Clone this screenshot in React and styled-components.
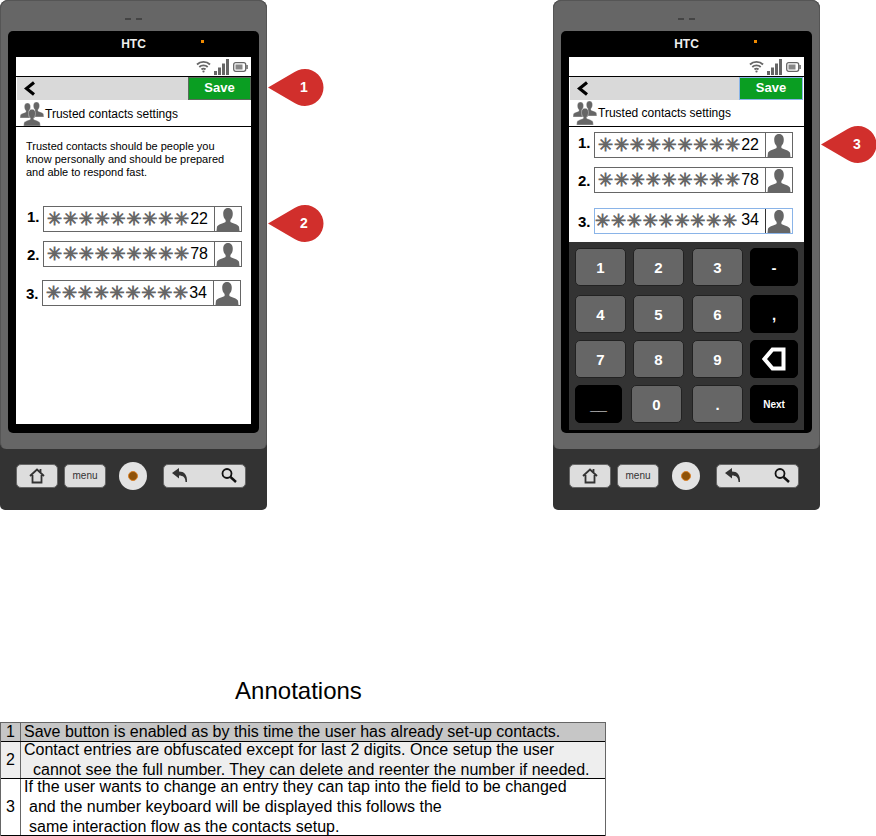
import styled, { createGlobalStyle } from "styled-components";

const firstContacts = [
  { n: 1, digits: "22", top: 0, shift: 0, rise: 5 },
  { n: 2, digits: "78", top: 9, shift: 0 },
  { n: 3, digits: "34", top: 13, shift: -1 },
];

const secondContacts = [
  { n: 1, digits: "22", top: 0, shift: 0, rise: 5 },
  { n: 2, digits: "78", top: 9, shift: 0 },
  { n: 3, digits: "34", top: 15, shift: 0, focused: true },
];

const keyRows = [
  { top: 6, keys: [{ t: "1", w: 51, gap: 7 }, { t: "2", w: 51, gap: 8 }, { t: "3", w: 51, gap: 7 }, { t: "-", w: 48, dark: true }] },
  { top: 9, keys: [{ t: "4", w: 51, gap: 7 }, { t: "5", w: 51, gap: 8 }, { t: "6", w: 51, gap: 7 }, { t: ",", w: 48, dark: true }] },
  { top: 7, keys: [{ t: "7", w: 51, gap: 7 }, { t: "8", w: 51, gap: 8 }, { t: "9", w: 51, gap: 7 }, { icon: true, w: 48, dark: true }] },
  { top: 7, keys: [{ t: "__", w: 47, gap: 9, dark: true }, { t: "0", w: 51, gap: 10 }, { t: ".", w: 51, gap: 7 }, { t: "Next", w: 48, dark: true, small: true }] },
];

function Wifi() {
  return (
    <svg width="15" height="13" viewBox="0 0 15 13" fill="none" stroke="#666" strokeWidth="1.800">
      <path d="M1 4.500C4.500 1 10.500 1 14 4.500" />
      <path d="M3.300 7C5.500 4.800 9.500 4.800 11.700 7" />
      <path d="M5.500 9.500C6.500 8.500 8.500 8.500 9.500 9.500" />
      <circle cx="7.500" cy="11.500" r="1.100" fill="#666" stroke="none" />
    </svg>
  );
}

function Bars() {
  return (
    <svg width="16" height="16" viewBox="0 0 16 16" fill="#666">
      <rect x="0" y="12" width="3" height="4" />
      <rect x="4" y="8.500" width="3" height="7.500" />
      <rect x="8" y="4.500" width="3" height="11.500" />
      <rect x="12" y="0" width="3" height="16" />
    </svg>
  );
}

function Battery() {
  return (
    <svg width="15" height="10" viewBox="0 0 15 10">
      <rect x="0.700" y="0.700" width="12" height="8.600" rx="2" fill="none" stroke="#666" strokeWidth="1.300" />
      <rect x="2.500" y="2.500" width="7" height="5" fill="#888" />
      <rect x="13.300" y="3" width="1.500" height="4" fill="#666" />
    </svg>
  );
}

function Chevron() {
  return (
    <svg width="12" height="15" viewBox="0 0 12 15" fill="none" stroke="#000" strokeWidth="3.200">
      <path d="M10 1.500L2.500 7.500L10 13.500" />
    </svg>
  );
}

function PersonShape({ x = 0, y = 0, s = 1 }) {
  return (
    <path
      transform={`translate(${x} ${y}) scale(${s})`}
      d="M12 0C8.500 0 7 2.800 7 6C7 9 8 11 9.500 12.500L9.500 14.500C7 16 1.500 17 0.500 19.500L0 24L24 24L23.500 19.500C22.500 17 17 16 14.500 14.500L14.500 12.500C16 11 17 9 17 6C17 2.800 15.500 0 12 0Z"
    />
  );
}

function Person() {
  return (
    <svg width="24" height="23" viewBox="0 0 24 24" fill="#666">
      <PersonShape />
    </svg>
  );
}

function People() {
  return (
    <svg width="24" height="24" viewBox="0 0 24 24" fill="#666" stroke="#fff" strokeWidth="0.500">
      <PersonShape x={0} y={1} s={0.62} />
      <PersonShape x={9} y={0} s={0.62} />
      <PersonShape x={3.600} y={7.200} s={0.7} />
    </svg>
  );
}

function Home() {
  return (
    <svg width="16" height="16" viewBox="0 0 16 16" fill="none" stroke="#333" strokeWidth="1.800">
      <path d="M1 8L8 1.500L15 8M3.500 7V14.500H12.500V7M11.500 4V1" />
    </svg>
  );
}

function Back() {
  return (
    <svg width="16" height="15" viewBox="0 0 16 15" fill="#333">
      <path d="M0 5L7 0V3.500C12 3.500 15.500 6.500 15 14L13.500 14C13.500 9.500 11 7.500 7 7.500V10.500Z" />
    </svg>
  );
}

function Search() {
  return (
    <svg width="16" height="15" viewBox="0 0 16 15" fill="none" stroke="#111" strokeWidth="1.800">
      <circle cx="6" cy="5.500" r="4.500" />
      <path d="M9.500 9L15 14" strokeWidth="2.400" />
    </svg>
  );
}

function Backspace() {
  return (
    <svg width="24" height="24" viewBox="0 0 24 24" fill="none" stroke="#fff" strokeWidth="4">
      <path d="M21.500 2.500V21.500H10.500L2.500 12L10.500 2.500Z" />
    </svg>
  );
}

function Pin({ n, top }) {
  return (
    <Callout $top={top}>
      <svg width="56" height="37" viewBox="0 0 56 37" fill="#d12f2c">
        <path d="M0 18.500L24 4.500C28 2 32 0 37 0A18.500 18.500 0 0 1 37 37C32 37 28 35 24 32.500Z" />
      </svg>
      <CalloutNumber>{n}</CalloutNumber>
    </Callout>
  );
}

function ContactRows({ contacts, pad, top = 0 }) {
  return (
    <FieldList $pad={pad} $top={top}>
      {contacts.map((c) => (
        <FieldRow key={c.n} $top={c.top} $shift={c.shift}>
          <FieldLabel $rise={c.rise}>{c.n}.</FieldLabel>
          <Field $focused={c.focused}>
            <Mask $focused={c.focused}>✳✳✳✳✳✳✳✳✳</Mask>
            <Digits $focused={c.focused}>{c.digits}</Digits>
            <Avatar $focused={c.focused}>
              <Person />
            </Avatar>
          </Field>
        </FieldRow>
      ))}
    </FieldList>
  );
}

function Keypad() {
  return (
    <KeypadWrap>
      {keyRows.map((row, i) => (
        <KeyRow key={i} $top={row.top}>
          {row.keys.map((k, j) => (
            <Key key={j} $w={k.w} $gap={k.gap} $dark={k.dark} $small={k.small}>
              {k.icon ? <Backspace /> : k.t}
            </Key>
          ))}
        </KeyRow>
      ))}
    </KeypadWrap>
  );
}

function Phone({ pins, editing, children }) {
  return (
    <PhoneBody>
      <Face>
        <Speaker>
          <SpeakerDash />
          <SpeakerDash />
        </Speaker>
        <Bezel>
          <BrandBar>
            HTC
            <Led />
          </BrandBar>
          <Screen $editing={editing}>
            <StatusBar>
              <Wifi />
              <Bars />
              <Battery />
            </StatusBar>
            <NavBar>
              <BackButton>
                <Chevron />
              </BackButton>
              <SaveButton $focused={editing}>Save</SaveButton>
            </NavBar>
            <TitleRow $editing={editing}>
              <People />
              <Title>Trusted contacts settings</Title>
            </TitleRow>
            {children}
          </Screen>
        </Bezel>
      </Face>
      <HardKeys>
        <HardKey $w={42}>
          <Home />
        </HardKey>
        <HardKey $w={42}>menu</HardKey>
        <RoundKey>
          <RoundDot />
        </RoundKey>
        <WideKey>
          <Back />
          <Search />
        </WideKey>
      </HardKeys>
      {pins.map((p) => (
        <Pin key={p.n} n={p.n} top={p.top} />
      ))}
    </PhoneBody>
  );
}

export default function App() {
  return (
    <Page>
      <GlobalStyle />
      <Phones>
        <Phone pins={[{ n: 1, top: 69 }, { n: 2, top: 205 }]}>
          <Intro>
            Trusted contacts should be people you
            <br />
            know personally and should be prepared
            <br />
            and able to respond fast.
          </Intro>
          <ContactRows contacts={firstContacts} pad={11} />
        </Phone>
        <Phone pins={[{ n: 3, top: 126 }]} editing>
          <ContactRows contacts={secondContacts} pad={9} top={5} />
          <Keypad />
        </Phone>
      </Phones>
      <AnnotationsTitle>Annotations</AnnotationsTitle>
      <AnnotationTable>
        <AnnotationRow $h={18} $bg="#c6c6c6">
          <RowNumber>1</RowNumber>
          <RowText>Save button is enabled as by this time the user has already set-up contacts.</RowText>
        </AnnotationRow>
        <AnnotationRow $h={36} $bg="#eeeeee">
          <RowNumber>2</RowNumber>
          <RowText>
            <Line>Contact entries are obfuscated except for last 2 digits. Once setup the user</Line>
            <Line $indent={9}>cannot see the full number. They can delete and reenter the number if needed.</Line>
          </RowText>
        </AnnotationRow>
        <AnnotationRow $h={56} $bg="#ffffff">
          <RowNumber>3</RowNumber>
          <RowText>
            <Line>If the user wants to change an entry they can tap into the field to be changed</Line>
            <Line $indent={5}>and the number keyboard will be displayed this follows the</Line>
            <Line $indent={5}>same interaction flow as the contacts setup.</Line>
          </RowText>
        </AnnotationRow>
      </AnnotationTable>
    </Page>
  );
}

const GlobalStyle = createGlobalStyle`
  html, body {
    margin: 0;
    background: #fff;
    font-family: "Liberation Sans", Arial, sans-serif;
  }
`;

const Page = styled.div`
  width: 876px;
  height: 836px;
  overflow: hidden;
`;

const Phones = styled.div`
  display: flex;
  gap: 286px;
`;

const PhoneBody = styled.div`
  position: relative;
  width: 267px;
  height: 510px;
  background: #333;
  border-radius: 8px 8px 5px 5px;
`;

const Face = styled.div`
  box-sizing: border-box;
  height: 449px;
  padding: 0 8px 0 7px;
  background: #666;
  border: 1px solid #555;
  border-bottom: none;
  border-radius: 8px 8px 6px 6px;
`;

const Speaker = styled.div`
  display: flex;
  justify-content: center;
  gap: 5px;
  height: 30px;
  padding-top: 17px;
  box-sizing: border-box;
`;

const SpeakerDash = styled.span`
  width: 6px;
  height: 2px;
  background: #444;
`;

const Bezel = styled.div`
  box-sizing: border-box;
  width: 251px;
  height: 402px;
  padding: 0 8px 3px;
  background: #000;
  border-radius: 5px;
  display: flex;
  flex-direction: column;
`;

const BrandBar = styled.div`
  position: relative;
  flex: none;
  height: 26px;
  line-height: 27px;
  color: #eee;
  font-size: 12px;
  font-weight: bold;
  text-align: center;
`;

const Led = styled.span`
  position: absolute;
  left: 185px;
  top: 9px;
  width: 3px;
  height: 3px;
  background: #f08a00;
`;

const Screen = styled.div`
  flex: 1;
  width: 235px;
  background: #fff;
  display: flex;
  flex-direction: column;
  margin-bottom: ${(p) => (p.$editing ? 0 : 6)}px;
`;

const StatusBar = styled.div`
  flex: none;
  box-sizing: border-box;
  height: 20px;
  display: flex;
  align-items: center;
  justify-content: flex-end;
  gap: 3px;
  padding-right: 3px;
  border-bottom: 1px solid #000;
`;

const NavBar = styled.div`
  flex: none;
  height: 23px;
  display: flex;
`;

const BackButton = styled.div`
  flex: 1;
  display: flex;
  align-items: center;
  padding-left: 7px;
  margin-left: 1px;
  background: #d9d9d9;
`;

const SaveButton = styled.div`
  box-sizing: border-box;
  width: ${(p) => (p.$focused ? 64 : 63)}px;
  margin-right: ${(p) => (p.$focused ? 1 : 0)}px;
  line-height: 19px;
  text-align: center;
  color: #fff;
  font-size: 13px;
  font-weight: bold;
  background: #0a9e22;
  border: 1px solid ${(p) => (p.$focused ? "#8ab4e8" : "#5a6a5a")};
`;

const TitleRow = styled.div`
  flex: none;
  box-sizing: border-box;
  height: 27px;
  display: flex;
  align-items: center;
  gap: 1px;
  padding-left: 4px;
  padding-top: ${(p) => (p.$editing ? 0 : 2)}px;
  border-bottom: 1px solid #000;
`;

const Title = styled.span`
  font-size: 12px;
  color: #000;
`;

const Intro = styled.p`
  margin: 13px 0 27px 10px;
  font-size: 11px;
  line-height: 13px;
  color: #000;
`;

const FieldList = styled.div`
  padding: ${(p) => p.$top}px 0 0 ${(p) => p.$pad}px;
`;

const FieldRow = styled.div`
  display: flex;
  align-items: center;
  margin-top: ${(p) => p.$top}px;
  margin-left: ${(p) => p.$shift}px;
`;

const FieldLabel = styled.span`
  width: 16px;
  margin-bottom: ${(p) => p.$rise || 0}px;
  font-size: 15px;
  font-weight: bold;
  color: #000;
`;

const Field = styled.div`
  box-sizing: border-box;
  width: 199px;
  height: 26px;
  display: flex;
  align-items: center;
  justify-content: space-between;
  border: 1px solid ${(p) => (p.$focused ? "#8ab4e8" : "#666")};
`;

const Mask = styled.span`
  padding-left: ${(p) => (p.$focused ? 0 : 3)}px;
  font-family: "DejaVu Sans", sans-serif;
  font-size: 18px;
  line-height: 1;
  letter-spacing: 0.800px;
  color: #666;
  -webkit-text-stroke: 0.800px #666;
  white-space: nowrap;
`;

const Digits = styled.span`
  margin-left: auto;
  margin-right: 6px;
  margin-bottom: ${(p) => (p.$focused ? 3 : 0)}px;
  font-size: 16px;
  color: #000;
`;

const Avatar = styled.div`
  width: 26px;
  height: 24px;
  flex: none;
  display: flex;
  align-items: flex-end;
  justify-content: center;
  border-left: 1px solid ${(p) => (p.$focused ? "#333" : "#666")};
`;

const KeypadWrap = styled.div`
  flex: 1;
  margin-top: 8px;
  padding-left: 6px;
  background: #333;
`;

const KeyRow = styled.div`
  display: flex;
  margin-top: ${(p) => p.$top}px;
`;

const Key = styled.div`
  box-sizing: border-box;
  width: ${(p) => p.$w}px;
  height: 38px;
  margin-right: ${(p) => p.$gap || 0}px;
  display: flex;
  align-items: center;
  justify-content: center;
  color: #fff;
  font-size: ${(p) => (p.$small ? "10px" : "15px")};
  font-weight: bold;
  background: ${(p) => (p.$dark ? "#000" : "#666")};
  border: 1px solid ${(p) => (p.$dark ? "#000" : "#222")};
  border-radius: 5px;
`;

const HardKeys = styled.div`
  height: 61px;
  display: flex;
  align-items: center;
  padding: 0 0 8px 16px;
  box-sizing: border-box;
`;

const HardKey = styled.div`
  box-sizing: border-box;
  width: ${(p) => p.$w}px;
  height: 24px;
  margin-right: 6px;
  display: flex;
  align-items: center;
  justify-content: center;
  color: #333;
  font-size: 10px;
  background: #ddd;
  border: 1px solid #666;
  border-radius: 5px;
`;

const RoundKey = styled.div`
  width: 28px;
  height: 28px;
  margin: 0 16px 0 7px;
  display: flex;
  align-items: center;
  justify-content: center;
  background: #e3e3e3;
  border-radius: 50%;
`;

const RoundDot = styled.span`
  width: 10px;
  height: 10px;
  background: #8f5208;
  border: 1px solid #d9822b;
  box-sizing: border-box;
  border-radius: 50%;
`;

const WideKey = styled(HardKey)`
  width: 83px;
  margin: 0;
  justify-content: space-between;
  padding: 0 8px;
`;

const Callout = styled.div`
  position: absolute;
  left: 268px;
  top: ${(p) => p.$top}px;
  width: 56px;
  height: 37px;
  svg {
    position: absolute;
    left: 0;
    top: 0;
  }
`;

const CalloutNumber = styled.span`
  position: absolute;
  left: 26px;
  width: 20px;
  top: 0;
  line-height: 37px;
  text-align: center;
  color: #fff;
  font-size: 14px;
  font-weight: bold;
`;

const AnnotationsTitle = styled.h2`
  margin: 168px 0 18px;
  width: 597px;
  text-align: center;
  font-size: 24px;
  line-height: 26px;
  font-weight: normal;
  color: #000;
`;

const AnnotationTable = styled.div`
  box-sizing: border-box;
  width: 606px;
  border: 1px solid #666;
`;

const AnnotationRow = styled.div`
  display: flex;
  height: ${(p) => p.$h}px;
  background: ${(p) => p.$bg};
  border-bottom: 1px solid #000;
`;

const RowNumber = styled.div`
  flex: none;
  box-sizing: border-box;
  width: 20px;
  display: flex;
  align-items: center;
  justify-content: center;
  font-size: 16px;
  color: #000;
  border-right: 1px solid #666;
`;

const RowText = styled.div`
  display: flex;
  flex-direction: column;
  justify-content: center;
  font-size: 16px;
  line-height: 20px;
  color: #000;
  white-space: nowrap;
  padding-left: 3px;
`;

const Line = styled.span`
  padding-left: ${(p) => p.$indent || 0}px;
`;
